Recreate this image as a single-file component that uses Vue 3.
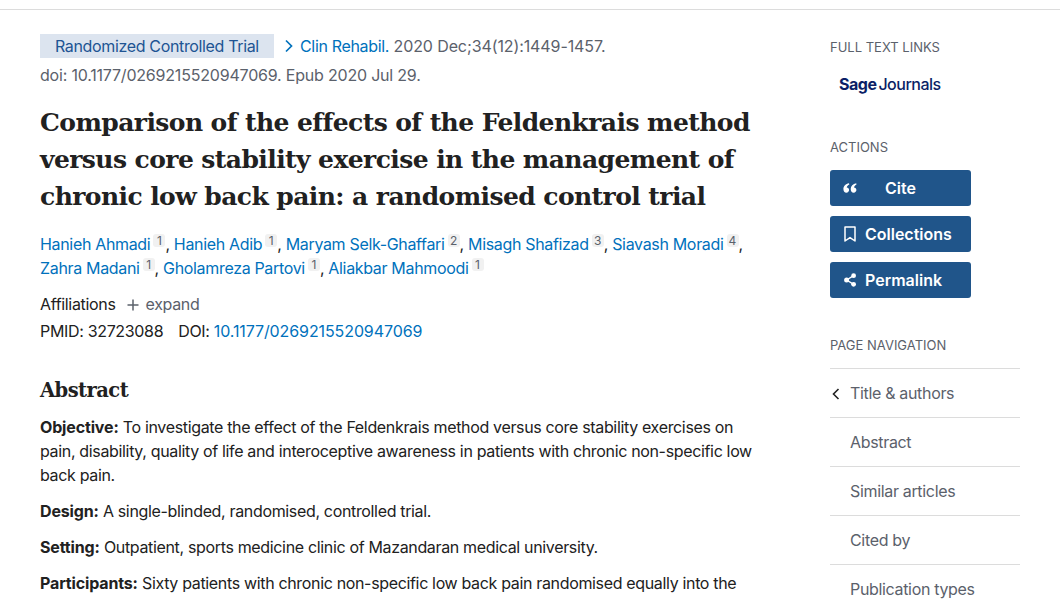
<script setup>
const authors1 = [
  ['Hanieh Ahmadi', 1], ['Hanieh Adib', 1], ['Maryam Selk-Ghaffari', 2], ['Misagh Shafizad', 3], ['Siavash Moradi', 4]
]
const authors2 = [
  ['Zahra Madani', 1], ['Gholamreza Partovi', 1], ['Aliakbar Mahmoodi', 1]
]
const nav = ['Abstract', 'Similar articles', 'Cited by', 'Publication types']
</script>

<template>
  <div class="page">
    <main class="article">
      <div class="citation">
        <div class="cite-line">
          <span class="pubtype">Randomized Controlled Trial</span>
          <svg class="chev" width="10" height="14" viewBox="0 0 10 14"><path d="M2 1.5 L7.5 7 L2 12.5" fill="none" stroke="#0071bc" stroke-width="1.7"/></svg>
          <a class="link">Clin Rehabil.</a>
          <span class="num">&nbsp;2020 Dec;34(12):1449-1457.</span>
        </div>
        <div class="cite-line second">doi: 10.1177/0269215520947069. Epub 2020 Jul 29.</div>
      </div>

      <h1 class="title">Comparison of the effects of the Feldenkrais method versus core stability exercise in the management of chronic low back pain: a randomised control trial</h1>

      <div class="authors">
        <div class="author-line">
          <template v-for="(a, i) in authors1" :key="a[0]">
            <a class="link">{{ a[0] }}</a><sup class="aff">{{ a[1] }}</sup><span class="comma">,</span><span v-if="i < 4">&nbsp;</span>
          </template>
        </div>
        <div class="author-line">
          <template v-for="(a, i) in authors2" :key="a[0]">
            <a class="link">{{ a[0] }}</a><sup class="aff">{{ a[1] }}</sup><span v-if="i < 2" class="comma">,&nbsp;</span>
          </template>
        </div>
      </div>

      <div class="affil">
        <span>Affiliations</span>
        <svg class="plus" width="12" height="12" viewBox="0 0 12 12"><path d="M6 0.5V11.5M0.5 6H11.5" stroke="#5b616b" stroke-width="1.5"/></svg>
        <span class="expand">expand</span>
      </div>
      <div class="ids">
        <span>PMID: 32723088</span>
        <span class="doi">DOI: <a class="link num">10.1177/0269215520947069</a></span>
      </div>

      <h2 class="abstract-h">Abstract</h2>
      <p class="para"><b>Objective:</b> To investigate the effect of the Feldenkrais method versus core stability exercises on pain, disability, quality of life and interoceptive awareness in patients with chronic non-specific low back pain.</p>
      <p class="para"><b>Design:</b> A single-blinded, randomised, controlled trial.</p>
      <p class="para"><b>Setting:</b> Outpatient, sports medicine clinic of Mazandaran medical university.</p>
      <p class="para"><b>Participants:</b> Sixty patients with chronic non-specific low back pain randomised equally into the Feldenkrais, core stability and control groups.</p>
    </main>

    <aside class="side">
      <h3 class="side-h first">FULL TEXT LINKS</h3>
      <div class="logo"><span class="sage">Sage</span><span class="journals">Journals</span></div>

      <h3 class="side-h actions">ACTIONS</h3>
      <button class="btn cite">
        <svg class="cite-icon" width="14" height="10" viewBox="0 0 14 10"><path fill="#fff" d="M6 0.3C2.8 1 0.4 3 0.4 6c0 2.2 1.2 3.7 3 3.7 1.5 0 2.7-1.1 2.7-2.6 0-1.4-1-2.5-2.4-2.6C4 3 5 2 6.3 1.5zM13.2 0.3C10 1 7.7 3 7.7 6c0 2.2 1.2 3.7 3 3.7 1.5 0 2.7-1.1 2.7-2.6 0-1.4-1-2.5-2.4-2.6.3-1.5 1.3-2.5 2.5-3z"/></svg>
        <span class="cite-label">Cite</span>
      </button>
      <button class="btn">
        <svg class="btn-icon" width="12" height="16" viewBox="0 0 12 16"><path d="M1 1h10v14l-5-3.4L1 15z" fill="none" stroke="#fff" stroke-width="1.5" stroke-linejoin="round"/></svg>
        <span>Collections</span>
      </button>
      <button class="btn">
        <svg class="btn-icon" width="12" height="14" viewBox="0 0 12 14"><circle cx="2.6" cy="7" r="2.5" fill="#fff"/><circle cx="9.6" cy="2.7" r="2.4" fill="#fff"/><circle cx="9.6" cy="11.3" r="2.4" fill="#fff"/><path d="M2.6 7 9.6 2.7M2.6 7l7 4.3" stroke="#fff" stroke-width="1.4"/></svg>
        <span>Permalink</span>
      </button>

      <h3 class="side-h page-nav">PAGE NAVIGATION</h3>
      <ul class="nav">
        <li class="nav-item">
          <svg class="back" width="8" height="12" viewBox="0 0 8 12"><path d="M6.5 1 1.5 6l5 5" fill="none" stroke="#212121" stroke-width="1.6"/></svg>
          <span>Title &amp; authors</span>
        </li>
        <li v-for="n in nav" :key="n" class="nav-item"><span>{{ n }}</span></li>
      </ul>
    </aside>
  </div>
</template>

<style>
html, body { margin: 0; background: #fff; overflow: hidden; }
</style>

<style scoped>
.page {
  width: 1060px;
  height: 600px;
  box-sizing: border-box;
  overflow: hidden;
  display: flex;
  font-family: Inter, "Liberation Sans", sans-serif;
  font-size: 16px;
  letter-spacing: -0.33px;
  color: #212121;
  background:
    linear-gradient(#dcdcdc, #dcdcdc) 0 9px / 100% 1px no-repeat #fff;
  padding: 34px 40px 0;
}
.article { width: 711px; flex: none; }
.side { width: 190px; flex: none; margin-left: 79px; }
.link { color: #0071bc; }
.num { letter-spacing: -0.1px; }
.citation { color: #5b616b; }
.cite-line { display: flex; align-items: center; height: 24px; white-space: nowrap; }
.second { margin-top: 5px; height: 24px; letter-spacing: -0.2px; }
.pubtype {
  background: #dce4ef;
  color: #205493;
  width: 234px;
  box-sizing: border-box;
  padding-left: 15px;
  height: 24px;
  line-height: 24px;
  letter-spacing: -0.35px;
}
.chev { margin: 0 6px 0 10px; }
.title {
  margin: 17px 0 0;
  font-family: "DejaVu Serif", "Liberation Serif", serif;
  font-weight: 700;
  font-size: 25px;
  line-height: 37px;
  color: #212121;
  letter-spacing: -0.58px;
  width: 716px;
}
.authors { margin-top: 17px; }
.author-line { height: 24px; line-height: 24px; white-space: nowrap; display: block; }
.aff {
  display: inline-block;
  box-sizing: border-box;
  min-width: 12px;
  text-align: center;
  vertical-align: 5px;
  font-size: 12px;
  line-height: 13px;
  background: #f1f1f1;
  color: #5b616b;
  padding: 0;
  margin-left: 3px;
  border-radius: 3px;
  letter-spacing: 0;
}
.comma { color: #212121; }
.affil { margin-top: 12px; height: 24px; display: flex; align-items: center; }
.plus { margin: 2px 7px 0 11px; }
.expand { color: #5b616b; }
.ids { height: 24px; line-height: 24px; margin-top: 3px; }
.doi { margin-left: 15px; }
.abstract-h {
  margin: 34px 0 0;
  font-family: "DejaVu Serif", "Liberation Serif", serif;
  font-weight: 700;
  font-size: 19.5px;
  line-height: 28px;
  color: #212121;
  letter-spacing: -0.55px;
}
.para { margin: 0 0 12px; line-height: 24px; width: 716px; letter-spacing: -0.34px; }
.abstract-h + .para { margin-top: 10px; }
.para b { font-weight: 700; letter-spacing: -0.15px; }
.side-h {
  margin: 0;
  font-size: 13px;
  font-weight: 400;
  line-height: 20px;
  color: #5b616b;
  letter-spacing: 0;
}
.first { margin-top: 3px; }
.logo { margin: 15px 0 0 9px; height: 24px; line-height: 24px; color: #0b1f66; white-space: nowrap; font-size: 16px; }
.sage { font-weight: 700; letter-spacing: -0.5px; }
.journals { margin-left: 2px; letter-spacing: -0.5px; font-weight: 500; }
.actions { margin-top: 41px; margin-bottom: 13px; }
.btn {
  display: flex;
  align-items: center;
  width: 141px;
  height: 36px;
  margin: 0 0 10px;
  padding: 0;
  border: 0;
  border-radius: 3px;
  background: #20558a;
  color: #fff;
  font: 600 16px Inter, "Liberation Sans", sans-serif;
  letter-spacing: 0;
}
.btn-icon { margin: 0 0 0 14px; width: 12px; flex: none; }
.btn-icon + span { margin-left: 9px; }
.cite-icon { margin-left: 13px; flex: none; }
.cite-label { margin-left: 28px; }
.page-nav { margin-top: 37px; }
.nav { list-style: none; margin: 13px 0 0; padding: 0; border-top: 1px solid #dcdcdc; }
.nav-item {
  height: 48px;
  border-bottom: 1px solid #dcdcdc;
  display: flex;
  align-items: center;
  padding-left: 20px;
  position: relative;
  color: #5b616b;
}
.back { position: absolute; left: 2px; top: 19px; }
</style>
